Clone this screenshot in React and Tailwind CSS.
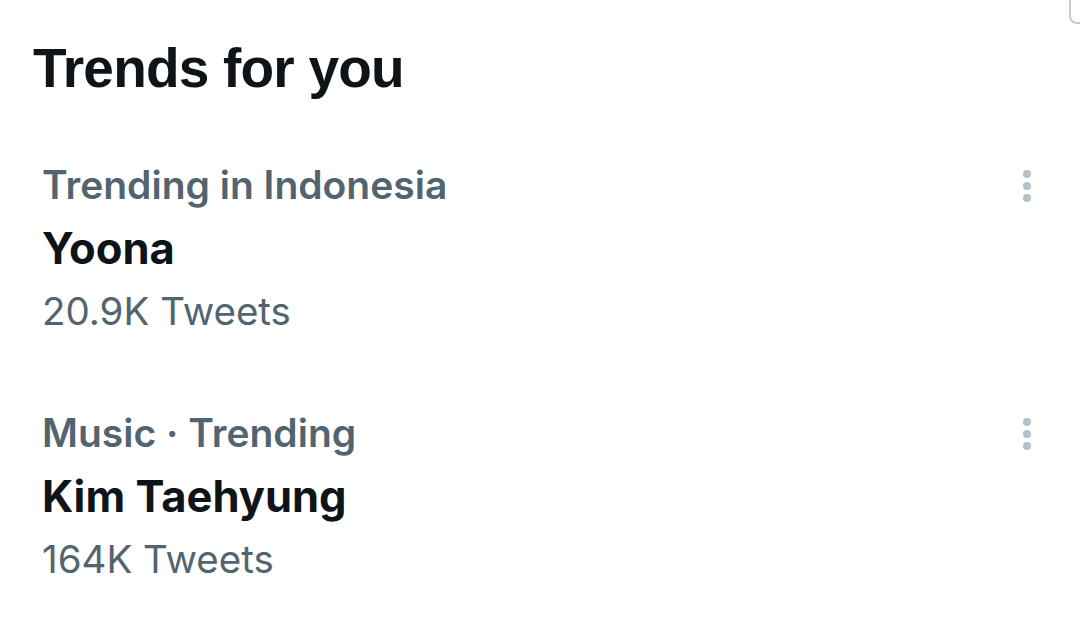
import React from 'react';

const trends = [
  { category: 'Trending in Indonesia', name: 'Yoona', count: '20.9K Tweets' },
  { category: 'Music · Trending', name: 'Kim Taehyung', count: '164K Tweets' },
];

const MoreDots = () => (
  <svg width="12" height="36" viewBox="0 0 12 36" className="text-[#b6c0c8]">
    <circle cx="6" cy="6" r="4" fill="currentColor" />
    <circle cx="6" cy="18" r="4" fill="currentColor" />
    <circle cx="6" cy="30" r="4" fill="currentColor" />
  </svg>
);

const App = () => {
  return (
    <div className="relative w-[1080px] h-[632px] bg-white overflow-hidden font-['Inter',sans-serif]">
      {/* scrollbar / overlay edge at top right */}
      <div className="absolute -top-4 left-[1069px] w-6 h-10 rounded-lg border-2 border-[#c9c9c9] bg-white"></div>

      <h1 className="pl-[33px] pt-[38px] text-[55px] leading-[60px] font-bold tracking-[-0.8px] text-[#0f1419] font-['Liberation_Sans',sans-serif]">
        Trends for you
      </h1>

      <div className="mt-[65px]">
        {trends.map((t, i) => (
          <div key={i} className="flex justify-between pl-[42px] pr-[47px] h-[248px]">
            <div className="flex flex-col">
              <span className="text-[39px] leading-[44px] font-semibold text-[#536471]">{t.category}</span>
              <span className="mt-[19px] text-[43.5px] leading-[44px] font-bold text-[#0f1419]">{t.name}</span>
              <span className="mt-[19px] text-[38.5px] leading-[44px] text-[#536471]">{t.count}</span>
            </div>
            <div className="pt-[5px]">
              <MoreDots />
            </div>
          </div>
        ))}
      </div>
    </div>
  );
};

export default App;
